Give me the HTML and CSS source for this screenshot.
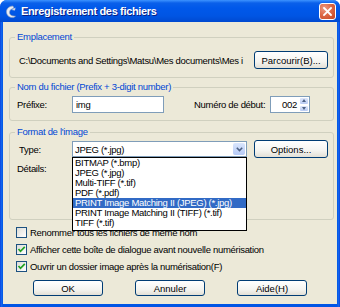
FILE: index.html
```html
<!DOCTYPE html>
<html lang="fr">
  <head>
    <meta charset="UTF-8" />
    <title>Enregistrement des fichiers</title>
    <link rel="stylesheet" href="styles.css">
  </head>
  <body>
    <div class="window">
      <header class="titlebar">
        <svg class="app-icon" width="12" height="14" viewBox="0 0 12 14">
          <path d="M8 1 C4 1 1 4 1.5 7.5 C2 11 5 13 9 12.5 L10.5 11 C7 11.5 4.5 10 4.5 7.5 C4.5 5 6.5 3.5 9 3.5 Z" fill="#e8edf5" stroke="#8a9bb8" stroke-width="0.6"/>
          <path d="M6.5 5 L10.5 2.5 L10 5.5 Z" fill="#c9d3e4"/>
        </svg>
        <span class="title">Enregistrement des fichiers</span>
        <button class="close">
          <svg width="9" height="9" viewBox="0 0 9 9">
            <path d="M1 1 L8 8 M8 1 L1 8" stroke="#fff" stroke-width="1.8" stroke-linecap="square"/>
          </svg>
        </button>
      </header>

      <div class="client">
        <fieldset class="group location">
          <legend>Emplacement</legend>
          <div class="row">
            <span class="path">C:\Documents and Settings\Matsu\Mes documents\Mes i</span>
            <button class="btn">Parcourir(B)...</button>
          </div>
        </fieldset>

        <fieldset class="group filename">
          <legend>Nom du fichier (Prefix + 3-digit number)</legend>
          <div class="row">
            <label class="prefix-label">Préfixe:</label>
            <div class="textbox prefix">img</div>
            <label class="start-label">Numéro de début:</label>
            <div class="textbox spin">
              <span class="spin-value">002</span>
              <div class="spin-btns">
                <span class="spin-up"></span>
                <span class="spin-down"></span>
              </div>
            </div>
          </div>
        </fieldset>

        <fieldset class="group format">
          <legend>Format de l'image</legend>
          <div class="row">
            <label class="type-label">Type:</label>
            <div class="combo">
              <span class="combo-value">JPEG (*.jpg)</span>
              <span class="combo-arrow">
                <svg width="7" height="5" viewBox="0 0 7 5">
                  <path d="M0.8 0.8 L3.5 3.5 L6.2 0.8" fill="none" stroke="#4d6185" stroke-width="1.6"/>
                </svg>
              </span>
              <ul class="droplist">
                <li>BITMAP (*.bmp)</li>
                <li>JPEG (*.jpg)</li>
                <li>Multi-TIFF (*.tif)</li>
                <li>PDF (*.pdf)</li>
                <li class="selected">PRINT Image Matching II (JPEG) (*.jpg)</li>
                <li>PRINT Image Matching II (TIFF) (*.tif)</li>
                <li>TIFF (*.tif)</li>
              </ul>
            </div>
            <button class="btn">Options...</button>
          </div>
          <div class="row details">
            <label>Détails:</label>
          </div>
        </fieldset>

        <div class="checks">
          <div class="check">
            <span class="box"></span>
            <span>Renommer tous les fichiers de même nom</span>
          </div>
          <div class="check">
            <span class="box on"><svg width="9" height="9" viewBox="0 0 9 9"><path d="M1.5 4 L3.5 6.3 L7.8 1.8" fill="none" stroke="#21a121" stroke-width="1.7"/></svg></span>
            <span>Afficher cette boîte de dialogue avant nouvelle numérisation</span>
          </div>
          <div class="check">
            <span class="box on"><svg width="9" height="9" viewBox="0 0 9 9"><path d="M1.5 4 L3.5 6.3 L7.8 1.8" fill="none" stroke="#21a121" stroke-width="1.7"/></svg></span>
            <span>Ouvrir un dossier image après la numérisation(F)</span>
          </div>
        </div>

        <div class="actions">
          <button class="btn default">OK</button>
          <button class="btn">Annuler</button>
          <button class="btn">Aide(H)</button>
        </div>
      </div>
    </div>
  </body>
</html>
```

FILE: styles.css
```css
body {
  margin: 0;
  background: #ffffff;
}

.window {
  width: 340px;
  height: 307px;
  display: flex;
  flex-direction: column;
  background: linear-gradient(90deg, #0831d9 0, #166aee 1px, #0055e5 3px, #0055e5 337px, #166aee 339px, #0831d9 340px);
  border-radius: 7px 7px 0 0;
  font-family: "Liberation Sans", Arial, sans-serif;
  font-size: 9.5px;
  letter-spacing: -0.3px;
  color: #000;
}

/* title bar */
.titlebar {
  height: 22px;
  flex: none;
  display: flex;
  align-items: center;
  border-radius: 7px 7px 0 0;
  background: linear-gradient(180deg, #3d93ff 0, #0a60ea 3px, #0058ea 8px, #0055e3 16px, #0049d0 22px);
}

.app-icon {
  margin: 1px 0 0 5px;
}

.title {
  margin-left: 4px;
  color: #fff;
  font-weight: bold;
  font-size: 11px;
  letter-spacing: -0.35px;
  text-shadow: 1px 1px 0 #0a1e84;
}

.close {
  margin: 1px 4px 0 auto;
  width: 17px;
  height: 17px;
  padding: 0;
  border: 1px solid #fff;
  border-radius: 3px;
  background: radial-gradient(circle at 30% 30%, #ec9a82 0, #dd6a48 45%, #c4441e 100%);
  display: flex;
  align-items: center;
  justify-content: center;
}

/* client area */
.client {
  flex: 1;
  margin: 0 3px 3px;
  background: #ece9d8;
  display: flex;
  flex-direction: column;
}

.group {
  margin: 0 3px 0 6px;
  padding: 0 5px 0 7px;
  border: 1px solid #d0d0bf;
  border-radius: 3px;
  min-width: 0;
}

.group legend {
  margin-left: -2px;
  padding: 0 2px;
  height: 12px;
  line-height: 12px;
  color: #0046d5;
}

.row {
  display: flex;
  align-items: center;
}

.location {
  margin-top: 9px;
  padding-bottom: 8px;
}

.location .row {
  margin-top: 8px;
}

.path {
  margin-left: 2px;
}

.filename {
  margin-top: 3px;
  padding-bottom: 7px;
}

.filename .row {
  margin-top: 3px;
}

.format {
  margin-top: 5px;
  padding-bottom: 45px;
}

.format .row {
  margin-top: 2px;
}

.format .details {
  margin-top: 4px;
  height: 12px;
}

.btn {
  margin-left: auto;
  width: 74px;
  height: 18px;
  padding: 0;
  border: 1px solid #003c74;
  border-radius: 3px;
  background: linear-gradient(180deg, #ffffff 0, #f4f4f0 60%, #e3e0d6 100%);
  font: inherit;
  color: #000;
}

.textbox {
  height: 17px;
  box-sizing: border-box;
  border: 1px solid #7f9db9;
  background: #fff;
  display: flex;
  align-items: center;
}

.prefix-label {
  width: 55px;
}

.prefix {
  width: 92px;
  padding-left: 3px;
}

.start-label {
  margin-left: 30px;
  width: 76px;
}

.spin {
  width: 40px;
  justify-content: flex-end;
}

.spin-value {
  margin-right: 2px;
}

.spin-btns {
  width: 10px;
  height: 15px;
  display: flex;
  flex-direction: column;
}

.spin-up,
.spin-down {
  flex: 1;
  position: relative;
  border-radius: 2px;
  background: linear-gradient(180deg, #dfe7fb, #b9cbf3);
  border: 1px solid #fff;
  box-sizing: border-box;
}

.spin-up::after,
.spin-down::after {
  content: "";
  position: absolute;
  left: 2px;
  border-left: 2px solid transparent;
  border-right: 2px solid transparent;
}

.spin-up::after {
  top: 1px;
  border-bottom: 3px solid #4d6185;
}

.spin-down::after {
  top: 1px;
  border-top: 3px solid #4d6185;
}

.type-label {
  width: 55px;
  padding-left: 2px;
  box-sizing: border-box;
}

.combo {
  position: relative;
  width: 175px;
  height: 16px;
  box-sizing: border-box;
  border: 1px solid #7f9db9;
  background: #fff;
  display: flex;
  align-items: center;
}

.combo-value {
  margin-left: 2px;
}

.combo-arrow {
  margin-left: auto;
  margin-right: 1px;
  width: 12px;
  height: 12px;
  border-radius: 2px;
  background: linear-gradient(180deg, #dae6fd, #b6caf6);
  display: flex;
  align-items: center;
  justify-content: center;
}

.droplist {
  position: absolute;
  z-index: 2;
  left: -1px;
  top: 15px;
  width: 175px;
  margin: 0;
  padding: 0 0 2px;
  box-sizing: border-box;
  list-style: none;
  border: 1px solid #000;
  background: #fff;
}

.droplist li {
  height: 10px;
  line-height: 10px;
  padding-left: 2px;
  white-space: nowrap;
}

.droplist .selected {
  background: #316ac5;
  color: #fff;
}

/* checkboxes */
.checks {
  margin: 7px 0 0 13px;
  display: flex;
  flex-direction: column;
  gap: 6px;
}

.check {
  display: flex;
  align-items: center;
  gap: 3px;
  height: 11px;
}

.box {
  width: 11px;
  height: 11px;
  box-sizing: border-box;
  border: 1px solid #1c5180;
  background: linear-gradient(135deg, #dcdcd7, #ffffff);
  display: flex;
  align-items: center;
  justify-content: center;
}

.actions {
  margin-top: 8px;
  display: flex;
  justify-content: center;
  gap: 32px;
}

.actions .btn {
  margin: 0;
  width: 70px;
  height: 16px;
}
```
